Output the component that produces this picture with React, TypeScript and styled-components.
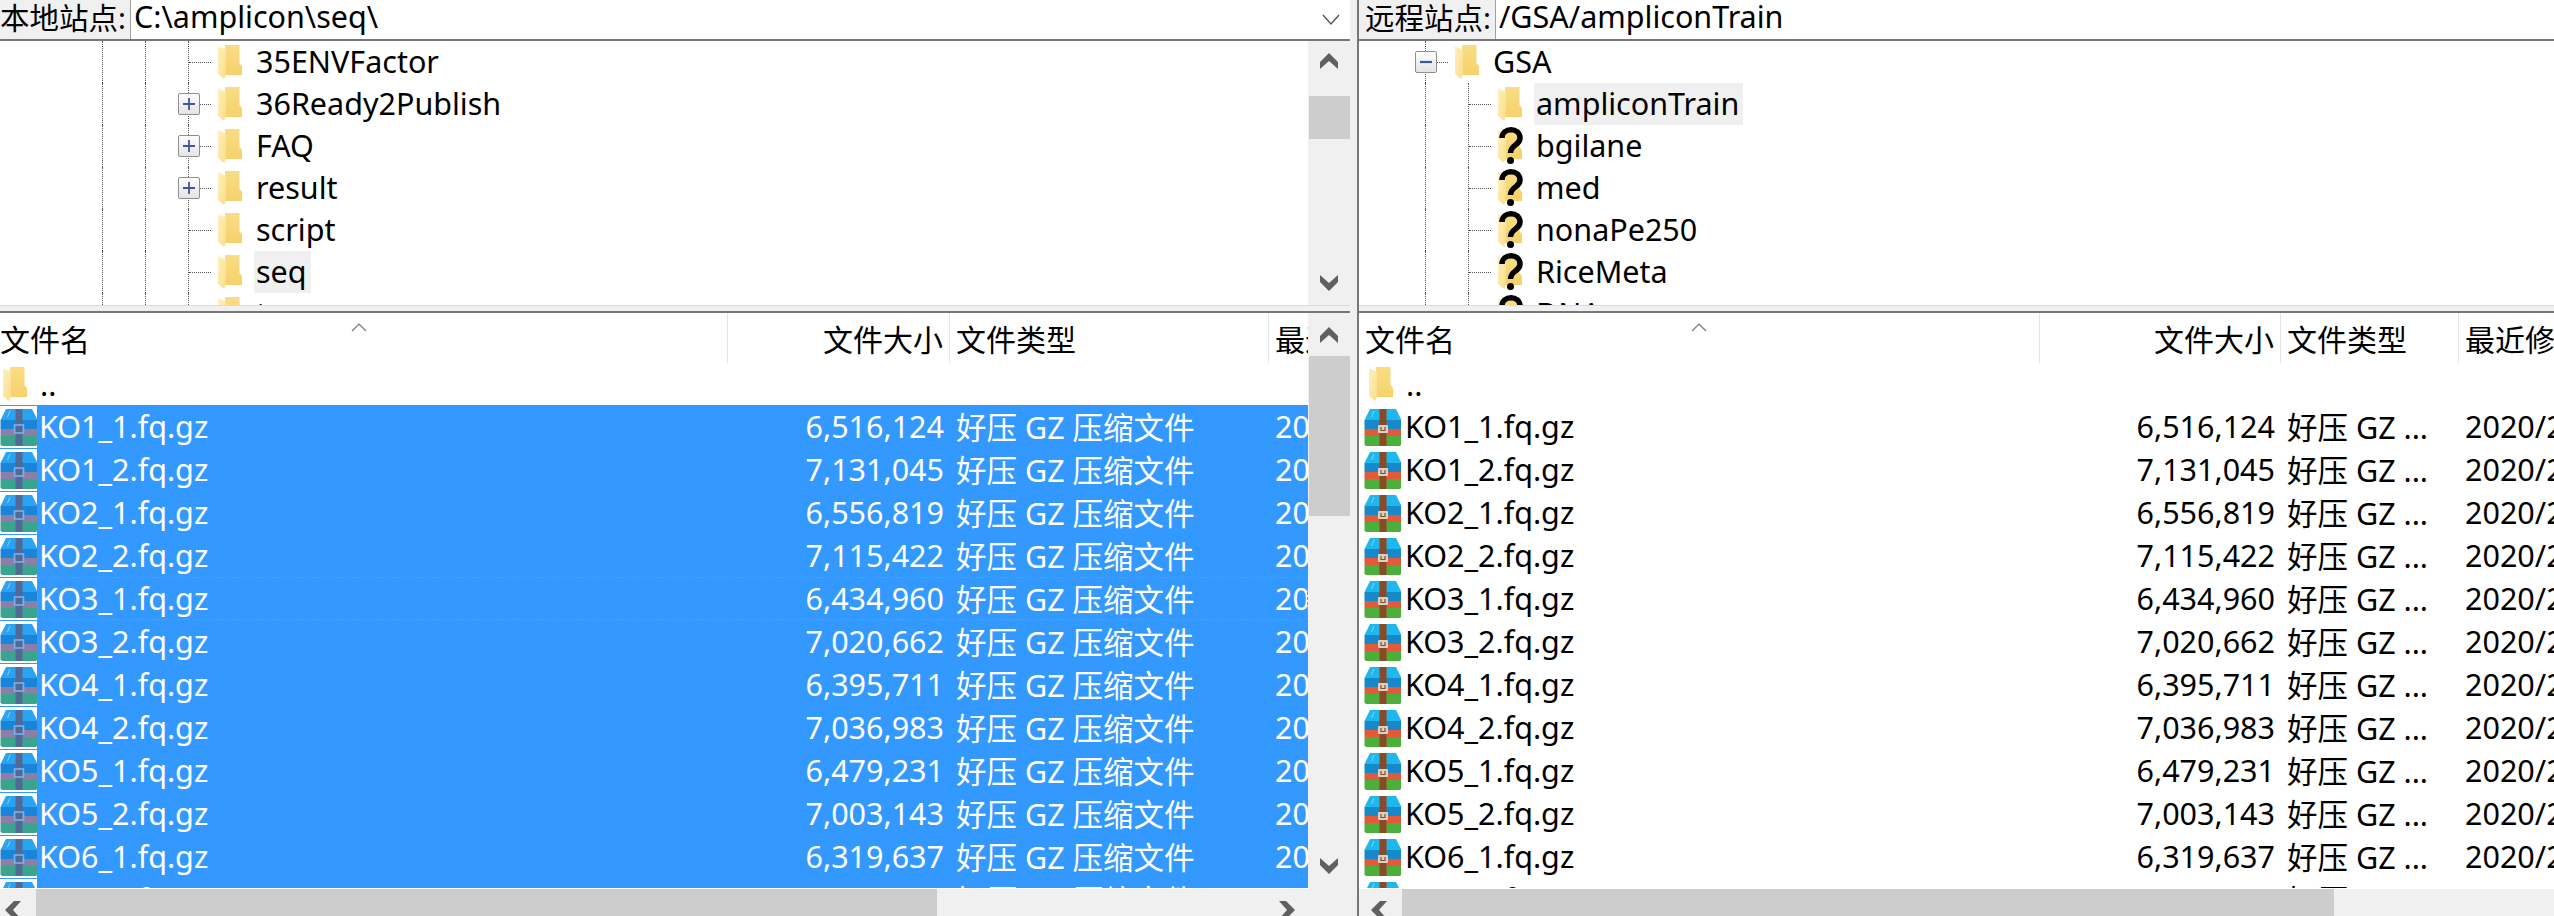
import React from "react";
import styled, { createGlobalStyle } from "styled-components";

const GlobalStyle = createGlobalStyle`
  html, body {
    margin: 0;
    padding: 0;
    background: #fff;
    overflow: hidden;
  }
  * {
    box-sizing: border-box;
  }
`;

const fontStack = `"Noto Sans", "Noto Sans CJK SC", sans-serif`;

const Window = styled.div`
  width: 2554px;
  height: 916px;
  display: grid;
  grid-template-columns: 1350px 9px 1195px;
  font-family: ${fontStack};
  font-size: 30.5px;
  color: #000;
  overflow: hidden;
`;

const Pane = styled.div`
  display: grid;
  grid-template-rows: 41px 264px 8px 1fr 27px;
  min-width: 0;
  height: 916px;
`;

const VerticalSplitter = styled.div`
  background: #f0f0f0;
  border-right: 2px solid #777;
`;

const HorizontalSplitter = styled.div`
  background: #f0f0f0;
  border-top: 1px solid #ddd;
  border-bottom: 2px solid #777;
`;

const AddressBar = styled.div`
  display: flex;
  align-items: center;
  border-bottom: 2px solid #777;
  white-space: nowrap;
  overflow: hidden;
`;

const AddressLabel = styled.div<{ $width: number; $inset: number }>`
  flex: none;
  width: ${(p) => p.$width}px;
  height: 100%;
  padding: 0 0 6px ${(p) => p.$inset}px;
  display: flex;
  align-items: center;
  font-size: 29.5px;
  background: #f0f0f0;
  border-right: 1px solid #a0a0a0;
`;

const AddressValue = styled.div`
  flex: 1;
  padding: 0 0 7px 3px;
`;

const Chevron = styled.svg`
  flex: none;
  width: 18px;
  height: 12px;
  margin-right: 10px;
`;

const TreeArea = styled.div`
  display: flex;
  min-height: 0;
  overflow: hidden;
`;

const TreeList = styled.div<{ $inset: number }>`
  flex: 1;
  padding-left: ${(p) => p.$inset}px;
  overflow: hidden;
  min-width: 0;
`;

const TreeRow = styled.div`
  display: flex;
  align-items: stretch;
  height: 42px;
  flex: none;
`;

const Guide = styled.div`
  flex: none;
  width: 43px;
  border-left: 1px dotted #555;
`;

const Connector = styled.div`
  position: relative;
  flex: none;
  width: 30px;
  border-left: 1px dotted #555;
  &::after {
    content: "";
    position: absolute;
    left: 0;
    right: 7px;
    top: 21px;
    border-top: 1px dotted #555;
  }
`;

const ExpandBox = styled.div`
  position: absolute;
  z-index: 1;
  left: -11px;
  top: 10px;
  width: 22px;
  height: 22px;
  border: 1px solid #8f8f8f;
  border-radius: 2px;
  background: linear-gradient(#fdfdfd, #e4e4e4);
  display: flex;
  align-items: center;
  justify-content: center;
`;

const TreeIconSlot = styled.div`
  flex: none;
  width: 36px;
  display: flex;
  align-items: center;
`;

const TreeLabel = styled.div<{ $current?: boolean }>`
  height: 42px;
  padding: 0 4px 3px 2px;
  display: flex;
  align-items: center;
  white-space: nowrap;
  background: ${(p) => (p.$current ? "#f0f0f0" : "transparent")};
`;

const ListArea = styled.div`
  display: flex;
  min-height: 0;
  overflow: hidden;
`;

const ListBody = styled.div`
  flex: 1;
  min-width: 0;
  overflow: hidden;
  border-bottom: 1px solid #fff;
`;

const HeaderRow = styled.div<{ $columns: string }>`
  display: grid;
  grid-template-columns: ${(p) => p.$columns};
  height: 50px;
  white-space: nowrap;
  font-size: 30px;
`;

const HeaderCell = styled.div<{ $align?: string; $inset?: number }>`
  position: relative;
  display: flex;
  align-items: center;
  justify-content: ${(p) => (p.$align === "right" ? "flex-end" : "flex-start")};
  padding: 0 6px 0 ${(p) => p.$inset ?? 6}px;
  border-right: 1px solid #e5e5e5;
  overflow: hidden;
  &:last-child {
    border-right: none;
  }
`;

const SortCaret = styled.svg<{ $left: number }>`
  position: absolute;
  left: ${(p) => p.$left}px;
  top: 10px;
  width: 16px;
  height: 9px;
`;

const FileRow = styled.div<{ $columns: string; $selected?: boolean; $focused?: boolean }>`
  position: relative;
  display: grid;
  grid-template-columns: ${(p) => p.$columns};
  height: 43px;
  align-items: center;
  white-space: nowrap;
  overflow: hidden;
  color: ${(p) => (p.$selected ? "#fff" : "#000")};
  background: ${(p) => (p.$selected ? "#3399ff" : "transparent")};
  &::after {
    content: "";
    display: ${(p) => (p.$focused ? "block" : "none")};
    position: absolute;
    inset: 0 0 0 37px;
    border: 1px dashed #c8862f;
  }
`;

const UpRow = styled.div<{ $inset: number }>`
  display: flex;
  align-items: center;
  height: 42px;
  padding-left: ${(p) => p.$inset}px;
  gap: 13px;
`;

const NameCell = styled.div<{ $inset: number }>`
  display: flex;
  align-items: center;
  height: 43px;
  padding-left: ${(p) => p.$inset}px;
  overflow: hidden;
`;

const IconBack = styled.div`
  flex: none;
  width: 37px;
  height: 43px;
  background: #fff;
  display: flex;
  align-items: center;
  overflow: hidden;
`;

const FileName = styled.span<{ $gap: number }>`
  margin-left: ${(p) => p.$gap}px;
  padding-bottom: 2px;
`;

const SizeCell = styled.div`
  text-align: right;
  padding: 0 6px 2px 0;
`;

const PlainCell = styled.div`
  padding: 0 0 2px 6px;
  overflow: hidden;
`;

const ScrollTrack = styled.div`
  flex: none;
  width: 42px;
  background: #f0f0f0;
  display: flex;
  flex-direction: column;
  align-items: stretch;
`;

const ScrollArrow = styled.div<{ $size: number; $pad?: string }>`
  flex: none;
  height: ${(p) => p.$size}px;
  padding: ${(p) => p.$pad ?? "0"};
  display: flex;
  align-items: center;
  justify-content: center;
`;

const ScrollFill = styled.div`
  flex: 1;
`;

const ScrollThumb = styled.div<{ $size: number }>`
  flex: none;
  height: ${(p) => p.$size}px;
  margin-left: 1px;
  background: #cdcdcd;
`;

const BottomBar = styled.div`
  display: flex;
  background: #f0f0f0;
  overflow: hidden;
`;

const SideArrow = styled.div<{ $size: number; $trim?: number }>`
  flex: none;
  width: ${(p) => p.$size}px;
  padding: 12px ${(p) => p.$trim ?? 0}px 0 0;
  display: flex;
  align-items: flex-start;
  justify-content: center;
`;

const BottomThumb = styled.div<{ $size: number }>`
  flex: none;
  width: ${(p) => p.$size}px;
  background: #cdcdcd;
`;

const BottomFill = styled.div`
  flex: 1;
`;

const Folder = ({ unknown }: { unknown?: boolean }) => (
  <svg width="24" height="36" viewBox="0 0 24 36" style={{ overflow: "visible" }}>
    <defs>
      <linearGradient id="folderBack" x1="0" y1="0" x2="0" y2="1">
        <stop offset="0" stopColor="#f9dd86" />
        <stop offset="1" stopColor="#f6d16b" />
      </linearGradient>
      <linearGradient id="folderFlap" x1="0" y1="0" x2="1" y2="1">
        <stop offset="0" stopColor="#fff0be" />
        <stop offset="1" stopColor="#fbdd8b" />
      </linearGradient>
    </defs>
    <path d="M1 1H21.5V19L24 22V31H7V1Z" fill="url(#folderBack)" />
    <path d="M0 2L8 6V31L6 35L0 30Z" fill="url(#folderFlap)" />
    {unknown && (
      <g>
        <path d="M4 10C4 -1 22 -1 22 10C22 18 12.5 16 12.5 25" fill="none" stroke="#000" strokeWidth="5.5" />
        <circle cx="12.5" cy="32.5" r="3.5" fill="#000" />
      </g>
    )}
  </svg>
);

const palettes = {
  normal: { lid: "#1fb8ee", top: "#1788c8", mid: "#e5593b", low: "#4caf3c", strap: "#8a4a25", buckle: "#d9d2c4" },
  selected: { lid: "#2aa3f0", top: "#1a84d8", mid: "#8a7fa6", low: "#3aa58e", strap: "#506a95", buckle: "#7fb0e8" }
};

const Archive = ({ selected }: { selected?: boolean }) => {
  const c = selected ? palettes.selected : palettes.normal;
  return (
    <svg width="38" height="37" viewBox="0 0 38 37" style={{ flex: "none" }}>
      <path d="M6 0H32L37.5 11H0.5Z" fill={c.lid} />
      <path d="M10 2L7.5 8" stroke="#a8e4fb" strokeWidth="1" opacity="0.7" />
      <rect x="0.5" y="11" width="37" height="9" fill={c.top} />
      <rect x="0.5" y="20" width="37" height="7" fill={c.mid} />
      <path d="M0.5 27H37.5V35.5L36 37H2L0.5 35.5Z" fill={c.low} />
      <rect x="15.5" y="0" width="7" height="37" fill={c.strap} />
      {selected ? (
        <rect x="14.5" y="16" width="9" height="8" fill="none" stroke={c.buckle} strokeWidth="1.6" />
      ) : (
        <>
          <rect x="14" y="16" width="10" height="8" rx="1" fill={c.buckle} />
          <path d="M17 18V21.5H21V18" fill="none" stroke={c.strap} strokeWidth="1.2" />
        </>
      )}
    </svg>
  );
};

const Plus = () => (
  <svg width="14" height="14" viewBox="0 0 14 14">
    <path d="M7 1V13M1 7H13" stroke="#3f56a5" strokeWidth="1.8" />
  </svg>
);

const Minus = () => (
  <svg width="14" height="14" viewBox="0 0 14 14">
    <path d="M1 7H13" stroke="#3f56a5" strokeWidth="2.2" />
  </svg>
);

const DownLine = () => (
  <Chevron viewBox="0 0 18 12">
    <path d="M1 1L9 10L17 1" fill="none" stroke="#555" strokeWidth="1.4" />
  </Chevron>
);

const directions: Record<string, number> = { up: 0, right: 90, down: 180, left: 270 };

const ScrollGlyph = ({ dir }: { dir: string }) => (
  <svg width="20" height="18" viewBox="0 0 20 18" style={{ transform: `rotate(${directions[dir]}deg)` }}>
    <path d="M10 1L19 10V17L10 9L1 17V10Z" fill="#606060" />
  </svg>
);

type TreeItem = {
  name: string;
  guides: number;
  box?: "plus" | "minus";
  current?: boolean;
  unknown?: boolean;
};

const localTree: TreeItem[] = [
  { name: "35ENVFactor", guides: 2 },
  { name: "36Ready2Publish", guides: 2, box: "plus" },
  { name: "FAQ", guides: 2, box: "plus" },
  { name: "result", guides: 2, box: "plus" },
  { name: "script", guides: 2 },
  { name: "seq", guides: 2, current: true },
  { name: "temp", guides: 2 }
];

const remoteTree: TreeItem[] = [
  { name: "GSA", guides: 0, box: "minus" },
  { name: "ampliconTrain", guides: 1, current: true },
  { name: "bgilane", guides: 1, unknown: true },
  { name: "med", guides: 1, unknown: true },
  { name: "nonaPe250", guides: 1, unknown: true },
  { name: "RiceMeta", guides: 1, unknown: true },
  { name: "DNA", guides: 1, unknown: true }
];

const files: [string, string][] = [
  ["KO1_1.fq.gz", "6,516,124"],
  ["KO1_2.fq.gz", "7,131,045"],
  ["KO2_1.fq.gz", "6,556,819"],
  ["KO2_2.fq.gz", "7,115,422"],
  ["KO3_1.fq.gz", "6,434,960"],
  ["KO3_2.fq.gz", "7,020,662"],
  ["KO4_1.fq.gz", "6,395,711"],
  ["KO4_2.fq.gz", "7,036,983"],
  ["KO5_1.fq.gz", "6,479,231"],
  ["KO5_2.fq.gz", "7,003,143"],
  ["KO6_1.fq.gz", "6,319,637"],
  ["KO6_2.fq.gz", "7,074,218"]
];

const Tree = ({ items, inset }: { items: TreeItem[]; inset: number }) => (
  <TreeList $inset={inset}>
    {items.map((item) => (
      <TreeRow key={item.name}>
        {Array.from({ length: item.guides }).map((_, i) => (
          <Guide key={i} />
        ))}
        <Connector>
          {item.box && <ExpandBox>{item.box === "plus" ? <Plus /> : <Minus />}</ExpandBox>}
        </Connector>
        <TreeIconSlot>
          <Folder unknown={item.unknown} />
        </TreeIconSlot>
        <TreeLabel $current={item.current}>{item.name}</TreeLabel>
      </TreeRow>
    ))}
  </TreeList>
);

const leftColumns = "728px 222px 319px 39px";
const rightColumns = "681px 241px 178px 95px";

const App = () => (
  <>
    <GlobalStyle />
    <Window>
      <Pane>
        <AddressBar>
          <AddressLabel $width={131} $inset={0}>本地站点:</AddressLabel>
          <AddressValue>C:\amplicon\seq\</AddressValue>
          <DownLine />
        </AddressBar>
        <TreeArea>
          <Tree items={localTree} inset={102} />
          <ScrollTrack>
            <ScrollArrow $size={55} $pad="0 0 15px"><ScrollGlyph dir="up" /></ScrollArrow>
            <ScrollThumb $size={43} />
            <ScrollFill />
            <ScrollArrow $size={55} $pad="11px 0 0"><ScrollGlyph dir="down" /></ScrollArrow>
          </ScrollTrack>
        </TreeArea>
        <HorizontalSplitter />
        <ListArea>
          <ListBody>
            <HeaderRow $columns={leftColumns}>
              <HeaderCell $inset={0}>
                文件名
                <SortCaret $left={351} viewBox="0 0 16 9">
                  <path d="M1 8L8 1L15 8" fill="none" stroke="#777" strokeWidth="1.2" />
                </SortCaret>
              </HeaderCell>
              <HeaderCell $align="right">文件大小</HeaderCell>
              <HeaderCell>文件类型</HeaderCell>
              <HeaderCell>最近修改</HeaderCell>
            </HeaderRow>
            <UpRow $inset={3}>
              <Folder />
              ..
            </UpRow>
            {files.map(([name, size], i) => (
              <FileRow key={name} $columns={leftColumns} $selected $focused={i === 4}>
                <NameCell $inset={0}>
                  <IconBack><Archive selected /></IconBack>
                  <FileName $gap={2}>{name}</FileName>
                </NameCell>
                <SizeCell>{size}</SizeCell>
                <PlainCell>好压 GZ 压缩文件</PlainCell>
                <PlainCell>2020/2/27</PlainCell>
              </FileRow>
            ))}
          </ListBody>
          <ScrollTrack>
            <ScrollArrow $size={43}><ScrollGlyph dir="up" /></ScrollArrow>
            <ScrollThumb $size={160} />
            <ScrollFill />
            <ScrollArrow $size={46}><ScrollGlyph dir="down" /></ScrollArrow>
          </ScrollTrack>
        </ListArea>
        <BottomBar>
          <SideArrow $size={36} $trim={10}><ScrollGlyph dir="left" /></SideArrow>
          <BottomThumb $size={901} />
          <BottomFill />
          <SideArrow $size={42}><ScrollGlyph dir="right" /></SideArrow>
          <SideArrow $size={42} />
        </BottomBar>
      </Pane>
      <VerticalSplitter />
      <Pane>
        <AddressBar>
          <AddressLabel $width={137} $inset={6}>远程站点:</AddressLabel>
          <AddressValue>/GSA/ampliconTrain</AddressValue>
        </AddressBar>
        <TreeArea>
          <Tree items={remoteTree} inset={66} />
        </TreeArea>
        <HorizontalSplitter />
        <ListArea>
          <ListBody>
            <HeaderRow $columns={rightColumns}>
              <HeaderCell>
                文件名
                <SortCaret $left={332} viewBox="0 0 16 9">
                  <path d="M1 8L8 1L15 8" fill="none" stroke="#777" strokeWidth="1.2" />
                </SortCaret>
              </HeaderCell>
              <HeaderCell $align="right">文件大小</HeaderCell>
              <HeaderCell>文件类型</HeaderCell>
              <HeaderCell>最近修改</HeaderCell>
            </HeaderRow>
            <UpRow $inset={10}>
              <Folder />
              ..
            </UpRow>
            {files.map(([name, size]) => (
              <FileRow key={name} $columns={rightColumns}>
                <NameCell $inset={5}>
                  <IconBack><Archive /></IconBack>
                  <FileName $gap={4}>{name}</FileName>
                </NameCell>
                <SizeCell>{size}</SizeCell>
                <PlainCell>好压 GZ ...</PlainCell>
                <PlainCell>2020/2/27</PlainCell>
              </FileRow>
            ))}
          </ListBody>
        </ListArea>
        <BottomBar>
          <SideArrow $size={43} $trim={3}><ScrollGlyph dir="left" /></SideArrow>
          <BottomThumb $size={932} />
          <BottomFill />
        </BottomBar>
      </Pane>
    </Window>
  </>
);

export default App;
